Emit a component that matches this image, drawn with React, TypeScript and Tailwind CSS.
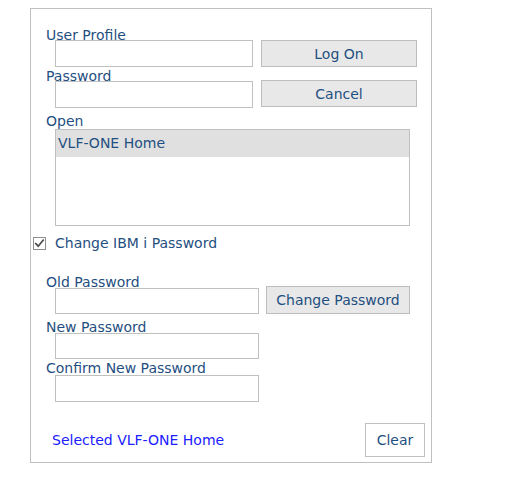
import React from "react";

const font = "font-['DejaVu_Sans','Verdana',sans-serif]";

export default function App() {
  return (
    <div className={`pl-[30px] pt-[8px] bg-white min-h-[478px] ${font} text-[14px] text-[#1f4f7f]`}>
      <div className="w-[402px] h-[455px] border border-[#c0c0c0] box-border bg-white flex flex-col">
        {/* User Profile row */}
        <div className="flex mt-[17px]">
          <div className="w-[222px] flex flex-col">
            <div className="pl-[15px] h-[14px] leading-[19px] whitespace-nowrap">User Profile</div>
            <div className="ml-[24px] w-[198px] h-[27px] border border-[#c0c0c0] bg-white" />
          </div>
          <button className="ml-[8px] mt-[14px] w-[156px] h-[27px] border border-[#bdbdbd] bg-[#e8e8e8] text-[14px] text-[#1f4f7f] leading-none">
            Log On
          </button>
        </div>
        {/* Password row */}
        <div className="flex">
          <div className="w-[222px] flex flex-col">
            <div className="pl-[15px] h-[14px] leading-[19px] whitespace-nowrap">Password</div>
            <div className="ml-[24px] w-[198px] h-[27px] border border-[#c0c0c0] bg-white" />
          </div>
          <button className="ml-[8px] mt-[13px] w-[156px] h-[27px] border border-[#bdbdbd] bg-[#e8e8e8] text-[14px] text-[#1f4f7f] leading-none">
            Cancel
          </button>
        </div>
        {/* Open */}
        <div className="mt-[6px] pl-[15px] h-[15px] leading-[15px]">Open</div>
        <div className="ml-[24px] w-[355px] h-[97px] border border-[#c0c0c0] bg-white">
          <div className="h-[27px] bg-[#e0e0e0] pl-[2px] flex items-center">VLF-ONE Home</div>
        </div>
        {/* Checkbox */}
        <div className="mt-[10px] h-[14px] flex items-center">
          <div className="ml-[2px] w-[13px] h-[13px] border border-[#8f8f8f] bg-white flex items-center justify-center">
            <svg width="11" height="11" viewBox="0 0 11 11">
              <path d="M1.8 5.6 L4.2 8.2 L9.2 2.2" fill="none" stroke="#4a4a4a" strokeWidth="1.7" strokeLinecap="square" />
            </svg>
          </div>
          <span className="ml-[9px] leading-[17px]">Change IBM i Password</span>
        </div>
        {/* Old Password */}
        <div className="flex mt-[24px]">
          <div className="w-[228px] flex flex-col">
            <div className="pl-[15px] h-[14px] leading-[17px] whitespace-nowrap">Old Password</div>
            <div className="ml-[24px] w-[204px] h-[26px] border border-[#c0c0c0] bg-white" />
          </div>
          <button className="ml-[7px] mt-[12px] w-[144px] h-[28px] border border-[#bdbdbd] bg-[#e8e8e8] text-[14px] text-[#1f4f7f] leading-none">
            Change Password
          </button>
        </div>
        {/* New Password */}
        <div className="mt-[5px] pl-[15px] h-[14px] leading-[17px] whitespace-nowrap">New Password</div>
        <div className="ml-[24px] w-[204px] h-[26px] border border-[#c0c0c0] bg-white" />
        {/* Confirm */}
        <div className="mt-[1px] pl-[15px] h-[15px] leading-[17px] whitespace-nowrap">Confirm New Password</div>
        <div className="ml-[24px] w-[204px] h-[27px] border border-[#c0c0c0] bg-white" />
        {/* Bottom */}
        <div className="mt-[21px] h-[34px] flex items-center justify-between pl-[21px] pr-[6px]">
          <span className="text-[#2020ff]">Selected VLF-ONE Home</span>
          <button className="w-[60px] h-[34px] border border-[#c0c0c0] bg-white text-[14px] text-[#1f4f7f] leading-none">
            Clear
          </button>
        </div>
      </div>
    </div>
  );
}
